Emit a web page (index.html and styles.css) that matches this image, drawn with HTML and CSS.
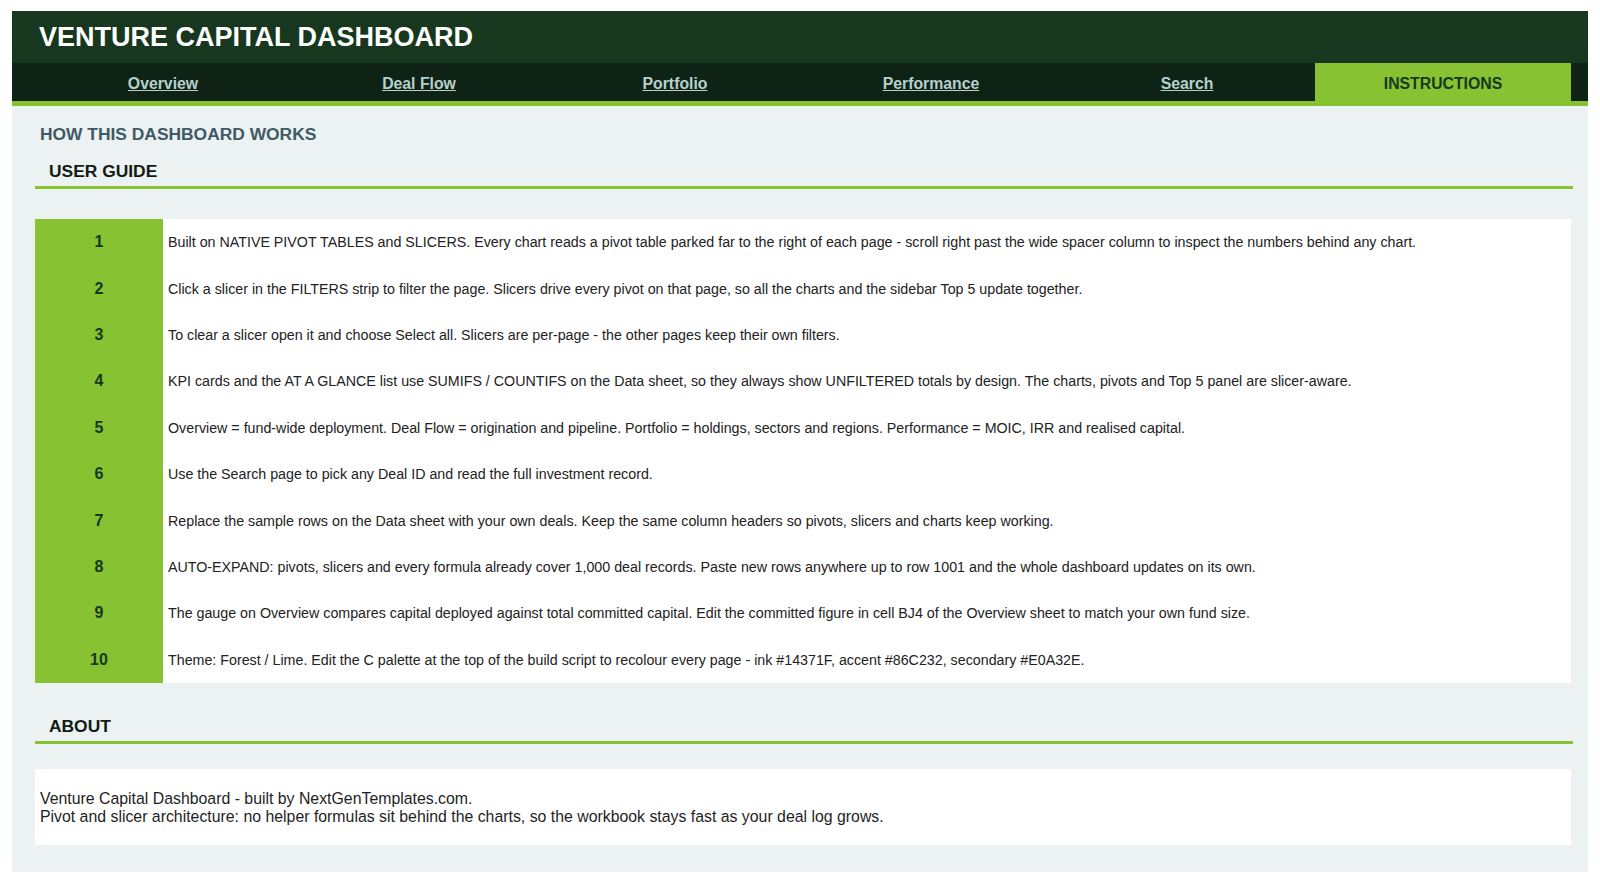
FILE: index.html
```html
<!DOCTYPE html>
<html lang="en">

<head>
    <meta charset="UTF-8">
    <meta name="viewport" content="width=device-width, initial-scale=1.0">
    <title>Venture Capital Dashboard - Instructions</title>
    <link rel="stylesheet" href="styles.css">
</head>

<body>
    <div class="sheet">
        <header class="topbar">
            <h1>VENTURE CAPITAL DASHBOARD</h1>
        </header>
        <nav class="tabs">
            <a class="tab" href="#">Overview</a>
            <a class="tab" href="#">Deal Flow</a>
            <a class="tab" href="#">Portfolio</a>
            <a class="tab" href="#">Performance</a>
            <a class="tab" href="#">Search</a>
            <span class="tab current">INSTRUCTIONS</span>
        </nav>

        <main class="content">
            <h2 class="page-title">HOW THIS DASHBOARD WORKS</h2>

            <h3 class="section">USER GUIDE</h3>
            <div class="guide">
                <div class="num">1</div>
                <div class="step">Built on NATIVE PIVOT TABLES and SLICERS. Every chart reads a pivot table parked far to the right of each page - scroll right past the wide spacer column to inspect the numbers behind any chart.</div>
                <div class="num">2</div>
                <div class="step">Click a slicer in the FILTERS strip to filter the page. Slicers drive every pivot on that page, so all the charts and the sidebar Top 5 update together.</div>
                <div class="num">3</div>
                <div class="step">To clear a slicer open it and choose Select all. Slicers are per-page - the other pages keep their own filters.</div>
                <div class="num">4</div>
                <div class="step">KPI cards and the AT A GLANCE list use SUMIFS / COUNTIFS on the Data sheet, so they always show UNFILTERED totals by design. The charts, pivots and Top 5 panel are slicer-aware.</div>
                <div class="num">5</div>
                <div class="step">Overview = fund-wide deployment. Deal Flow = origination and pipeline. Portfolio = holdings, sectors and regions. Performance = MOIC, IRR and realised capital.</div>
                <div class="num">6</div>
                <div class="step">Use the Search page to pick any Deal ID and read the full investment record.</div>
                <div class="num">7</div>
                <div class="step">Replace the sample rows on the Data sheet with your own deals. Keep the same column headers so pivots, slicers and charts keep working.</div>
                <div class="num">8</div>
                <div class="step">AUTO-EXPAND: pivots, slicers and every formula already cover 1,000 deal records. Paste new rows anywhere up to row 1001 and the whole dashboard updates on its own.</div>
                <div class="num">9</div>
                <div class="step">The gauge on Overview compares capital deployed against total committed capital. Edit the committed figure in cell BJ4 of the Overview sheet to match your own fund size.</div>
                <div class="num">10</div>
                <div class="step">Theme: Forest / Lime. Edit the C palette at the top of the build script to recolour every page - ink #14371F, accent #86C232, secondary #E0A32E.</div>
            </div>

            <h3 class="section about-head">ABOUT</h3>
            <div class="about">
                <p>Venture Capital Dashboard - built by NextGenTemplates.com.</p>
                <p>Pivot and slicer architecture: no helper formulas sit behind the charts, so the workbook stays fast as your deal log grows.</p>
            </div>
        </main>
    </div>
</body>
</html>
```

FILE: styles.css
```css
body {
    margin: 0;
    background: #fff;
    font-family: "Liberation Sans", Arial, sans-serif;
}

.sheet {
    margin: 11px 12px 12px;
    background: #ecf1f1;
}

.topbar {
    height: 52px;
    background: #17381f;
    display: flex;
    align-items: center;
    padding-left: 27px;
}

.topbar h1 {
    margin: 0;
    color: #fff;
    font-size: 27px;
    font-weight: bold;
}

/* sheet tabs - the active one is filled with the accent */
.tabs {
    display: flex;
    height: 38px;
    padding-left: 23px;
    background: #0e2315;
    border-bottom: 5px solid #86c232;
}

.tab {
    width: 256px;
    display: flex;
    align-items: center;
    justify-content: center;
    padding-top: 3px;
    color: #b7d0cc;
    font-size: 15.8px;
    font-weight: bold;
}

.tab.current {
    background: #86c232;
    color: #17381f;
    text-decoration: none;
}

.content {
    padding: 18px 15px 27px 23px;
}

.page-title {
    margin: 0 0 0 5px;
    font-size: 17.4px;
    color: #3e5a66;
}

.section {
    margin: 16px 0 0;
    padding: 0 0 4px 14px;
    font-size: 17.4px;
    color: #111b16;
    border-bottom: 3px solid #86c232;
}

.guide {
    display: grid;
    grid-template-columns: 128px 1fr;
    grid-auto-rows: 46.4px;
    margin: 30px 2px 0 0;
    background: #fff;
}

.num {
    display: flex;
    align-items: center;
    justify-content: center;
    background: #86c232;
    color: #17381f;
    font-size: 16px;
    font-weight: bold;
}

.step {
    display: flex;
    align-items: center;
    padding-left: 5px;
    font-size: 14.25px;
    color: #222;
}

.about-head {
    margin-top: 33px;
}

.about {
    margin: 25px 2px 0 0;
    padding: 21px 5px 19px;
    background: #fff;
    font-size: 15.85px;
    color: #1e1e1e;
    line-height: 18px;
}

.about p {
    margin: 0;
}
```
